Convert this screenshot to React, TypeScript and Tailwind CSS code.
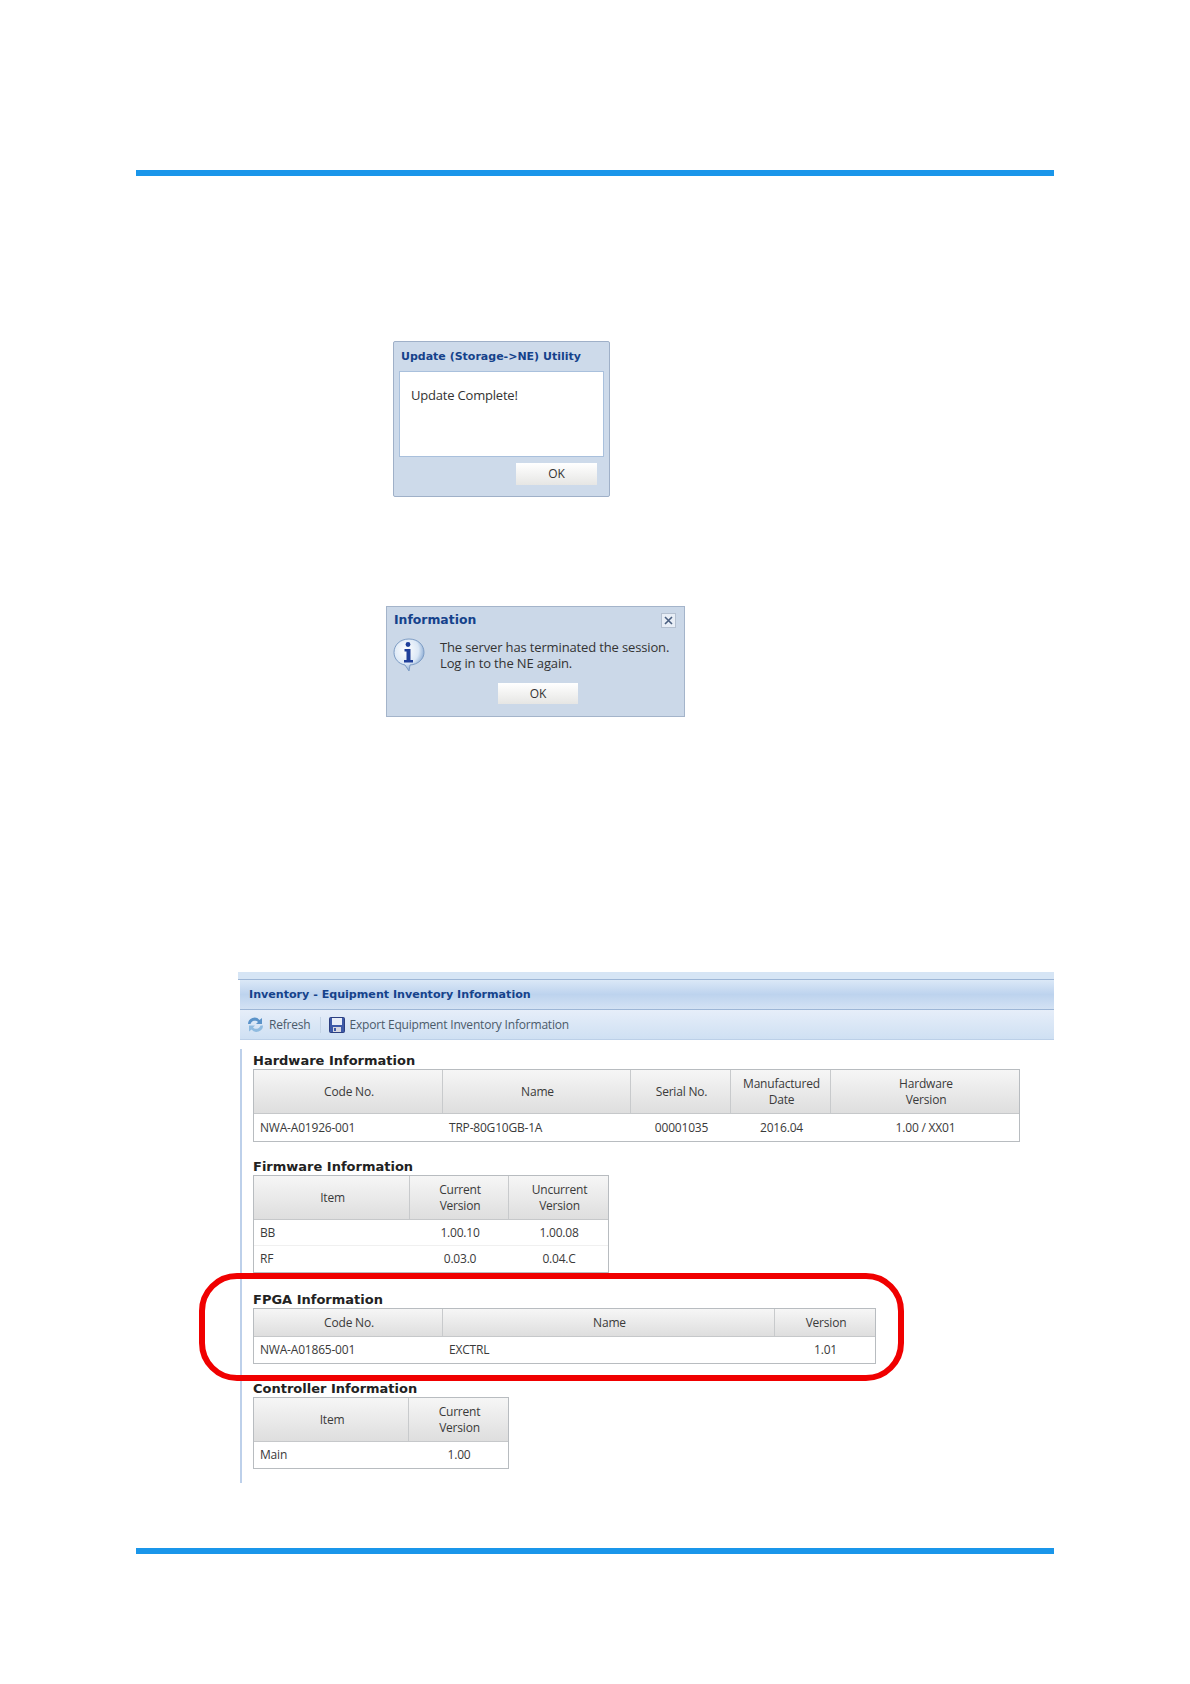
const bodyFont = "font-['Open_Sans','DejaVu_Sans',sans-serif] tracking-[-0.2px]";
const headFont = "font-['DejaVu_Sans',sans-serif] tracking-normal";

type Column = { width: string; label: string[]; left?: boolean };

const DataTable = ({
  width,
  headerHeight,
  columns,
  rows,
  rowHeight,
}: {
  width: string;
  headerHeight: string;
  columns: Column[];
  rows: string[][];
  rowHeight: string;
}) => (
  <div className={`${width} border border-[#b8bcc0] bg-white text-[12px] text-[#3a3a3a]`}>
    <div className={`flex ${headerHeight} bg-gradient-to-b from-[#f6f6f6] to-[#dedede] border-b border-[#c6c8ca]`}>
      {columns.map((col, i) => (
        <div
          key={i}
          className={`${col.width} flex flex-col items-center justify-center pl-[2px] pt-[1px] leading-[16px] border-r border-[#c8cacc] last:border-r-0`}
        >
          {col.label.map((line) => (
            <span key={line}>{line}</span>
          ))}
        </div>
      ))}
    </div>
    {rows.map((row, r) => (
      <div key={r} className={`flex ${rowHeight} items-center border-b border-[#f0f0f0] last:border-b-0`}>
        {row.map((cell, i) => (
          <div
            key={i}
            className={`${columns[i].width} ${columns[i].left ? "pl-[6px] text-left" : "pl-[1px] text-center"}`}
          >
            {cell}
          </div>
        ))}
      </div>
    ))}
  </div>
);

const Heading = ({ children, className }: { children: string; className: string }) => (
  <h3 className={`${className} h-[20px] leading-[24px] text-[13px] font-bold text-[#222] ${headFont}`}>{children}</h3>
);

const OkButton = ({ className }: { className: string }) => (
  <div
    className={`${className} flex items-center justify-center bg-gradient-to-b from-[#ffffff] to-[#e6e6e4] text-[12px] text-[#333]`}
  >
    OK
  </div>
);

const InfoIcon = () => (
  <svg width="34" height="36" viewBox="0 0 34 36" className="-ml-[2px] -mt-[2px] shrink-0">
    <defs>
      <radialGradient id="bubble" cx="0.4" cy="0.35" r="0.7">
        <stop offset="0" stopColor="#ffffff" />
        <stop offset="0.6" stopColor="#dce8f6" />
        <stop offset="1" stopColor="#6f97c8" />
      </radialGradient>
    </defs>
    <path
      d="M17 2C8 2 2 8 2 15.500 2 22 7 27 13 28l4 6 1-6c8-.5 14-6 14-12.500C32 8 26 2 17 2z"
      fill="url(#bubble)"
      stroke="#7d9cc4"
      strokeWidth="1"
    />
    <circle cx="16" cy="7.500" r="2.400" fill="#1f3f9a" />
    <path d="M12.500 12h6v11h2.500v2.500h-9V23h2.500v-8.500h-2z" fill="#1f3f9a" />
  </svg>
);

const RefreshIcon = () => (
  <svg width="17" height="17" viewBox="0 0 17 17" className="shrink-0">
    <path d="M1 8a6.500 6.500 0 0 1 11.500-4L15 2v6h-6l2-2A4.500 4.500 0 0 0 3.500 8z" fill="#5b93c9" />
    <path d="M16 9.500a6.500 6.500 0 0 1-11.500 4L2 15.500v-6h6l-2 2a4.500 4.500 0 0 0 7.500-2z" fill="#8fbbe0" />
  </svg>
);

const SaveIcon = () => (
  <svg width="16" height="16" viewBox="0 0 16 16" className="shrink-0">
    <rect x="0.500" y="0.500" width="15" height="15" rx="1" fill="#3e5aa8" stroke="#2c3f80" />
    <rect x="3" y="1" width="10" height="7" fill="#e8eef8" />
    <rect x="4" y="10" width="8" height="5" fill="#d8d8e0" />
    <rect x="5" y="11" width="2" height="3" fill="#3e5aa8" />
  </svg>
);

export default function App() {
  return (
    <div className={`relative h-[1684px] w-[1190px] overflow-hidden bg-white pt-[170px] ${bodyFont}`}>
      <div className="mx-[136px] h-[6px] bg-[#1a96ea]" />

      <div className="ml-[393px] mt-[165px] flex h-[156px] w-[217px] flex-col rounded-[2px] border border-[#9fb0c8] bg-[#cddaea]">
        <div className={`h-[29px] pl-[7px] text-[11px] font-bold leading-[29px] text-[#15428b] ${headFont}`}>
          Update (Storage-&gt;NE) Utility
        </div>
        <div className="mx-[5px] h-[86px] border border-[#a9c0dc] bg-white pl-[11px] pt-[14px] text-[13px] leading-[18px] text-[#333]">
          Update Complete!
        </div>
        <div className="flex justify-end pr-[12px] pt-[6px]">
          <OkButton className="h-[22px] w-[81px]" />
        </div>
      </div>

      <div className="ml-[386px] mt-[109px] h-[111px] w-[299px] border border-[#a4b4ca] bg-[#cbd8e8] pl-[7px]">
        <div className="flex h-[26px] items-center justify-between pr-[8px]">
          <span className={`text-[12.400px] font-bold text-[#15428b] ${headFont}`}>Information</span>
          <span className="flex h-[15px] w-[15px] items-center justify-center border border-[#b4c0d0] bg-[#e8eef6]">
            <svg width="9" height="9" viewBox="0 0 9 9">
              <path d="M1 1l7 7M8 1l-7 7" stroke="#4a5f80" strokeWidth="1.600" />
            </svg>
          </span>
        </div>
        <div className="flex gap-[14px] pt-[6px]">
          <InfoIcon />
          <div className="text-[13px] leading-[16px] tracking-[-0.14px] text-[#333]">
            <p>The server has terminated the session.</p>
            <p>Log in to the NE again.</p>
          </div>
        </div>
        <OkButton className="ml-[104px] mt-[10px] h-[21px] w-[80px]" />
      </div>

      <div className="ml-[238px] mr-[136px] mt-[255px]">
        <div className="h-[8px] border-b border-[#9db6d6] bg-[#d6e5f5]" />
        <div
          className={`ml-[2px] flex h-[30px] items-center border-b border-[#9db6d6] bg-gradient-to-b from-[#dbe8f7] via-[#bdd3ee] to-[#d3e2f4] pl-[9px] pt-[1px] text-[11.100px] font-bold text-[#15428b] ${headFont}`}
        >
          Inventory - Equipment Inventory Information
        </div>
        <div className="ml-[2px] flex h-[30px] items-center border-b border-[#bcd0e8] bg-gradient-to-b from-[#e6eef9] to-[#cfe0f3] pl-[7px] text-[12px] text-[#4a5a6a]">
          <RefreshIcon />
          <span className="ml-[5px]">Refresh</span>
          <span className="ml-[9px] mr-[8px] h-[16px] w-px bg-[#c4d4e6]" />
          <SaveIcon />
          <span className="ml-[5px]">Export Equipment Inventory Information</span>
        </div>

        <div className="ml-[2px] w-fit border-l-2 border-[#bdd0ea] pb-[14px] pl-[11px] pr-[130px]">
          <Heading className="mt-[9px]">Hardware Information</Heading>
          <DataTable
            width="w-[767px]"
            headerHeight="h-[44px]"
            rowHeight="h-[27px]"
            columns={[
              { width: "w-[189px]", label: ["Code No."], left: true },
              { width: "w-[188px]", label: ["Name"], left: true },
              { width: "w-[100px]", label: ["Serial No."] },
              { width: "w-[100px]", label: ["Manufactured", "Date"] },
              { width: "w-[188px]", label: ["Hardware", "Version"] },
            ]}
            rows={[["NWA-A01926-001", "TRP-80G10GB-1A", "00001035", "2016.04", "1.00 / XX01"]]}
          />

          <Heading className="mt-[13px]">Firmware Information</Heading>
          <DataTable
            width="w-[356px]"
            headerHeight="h-[44px]"
            rowHeight="h-[26px]"
            columns={[
              { width: "w-[156px]", label: ["Item"], left: true },
              { width: "w-[99px]", label: ["Current", "Version"] },
              { width: "w-[99px]", label: ["Uncurrent", "Version"] },
            ]}
            rows={[
              ["BB", "1.00.10", "1.00.08"],
              ["RF", "0.03.0", "0.04.C"],
            ]}
          />

          <div className="relative">
            <Heading className="mt-[15px]">FPGA Information</Heading>
            <DataTable
              width="w-[623px]"
              headerHeight="h-[28px]"
              rowHeight="h-[26px]"
              columns={[
                { width: "w-[189px]", label: ["Code No."], left: true },
                { width: "w-[332px]", label: ["Name"], left: true },
                { width: "w-[100px]", label: ["Version"] },
              ]}
              rows={[["NWA-A01865-001", "EXCTRL", "1.01"]]}
            />
            <div className="absolute -left-[54px] -top-[15px] h-[108px] w-[705px] rounded-[38px] border-[6px] border-[#f00000]" />
          </div>

          <Heading className="mt-[13px]">Controller Information</Heading>
          <DataTable
            width="w-[256px]"
            headerHeight="h-[44px]"
            rowHeight="h-[26px]"
            columns={[
              { width: "w-[155px]", label: ["Item"], left: true },
              { width: "w-[99px]", label: ["Current", "Version"] },
            ]}
            rows={[["Main", "1.00"]]}
          />
        </div>
      </div>

      <div className="mx-[136px] mt-[65px] h-[6px] bg-[#1a96ea]" />
    </div>
  );
}
